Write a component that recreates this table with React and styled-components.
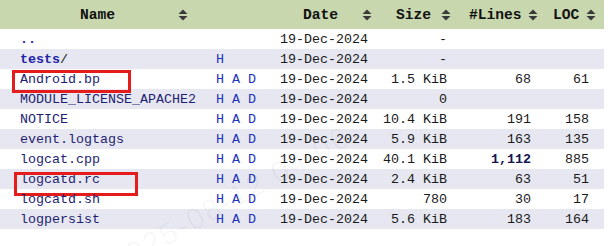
import styled, { createGlobalStyle } from 'styled-components';

const GlobalStyle = createGlobalStyle`
  body {
    margin: 0;
    background: #fff;
    font-family: "Liberation Mono", "DejaVu Sans Mono", monospace;
  }
`;

const COLS = '196px 76px 108px 79px 87px 58px';

const Listing = styled.div`
  position: relative;
  width: 604px;
  height: 246px;
  overflow: hidden;
  font-size: 13.33px;
`;

const HeadRow = styled.div`
  display: grid;
  grid-template-columns: ${COLS};
  height: 29px;
  background: #c8d7ae;
`;

const HeadCell = styled.div`
  display: flex;
  align-items: center;
  padding-left: ${p => p.$pad || 0}px;
  padding-right: 8px;
  font-family: "Liberation Mono", monospace;
  font-weight: bold;
  font-size: 14.6px;
  color: #111;
`;

const HeadLabel = styled.span`
  flex: 1;
`;

const Row = styled.div`
  display: grid;
  grid-template-columns: ${COLS};
  height: 20px;
  align-items: center;
  background: ${p => (p.$shade ? '#e6e7f0' : '#fff')};
  color: #1a1a1a;
`;

const NameCell = styled.div`
  position: relative;
  padding-left: 20px;
  white-space: nowrap;
  color: #1e1e72;
`;

const DirLink = styled.span`
  font-weight: bold;
  color: #2323a8;
`;

const Slash = styled.span`
  color: #222;
`;

const Mark = styled.span`
  position: absolute;
  left: ${p => p.$left}px;
  top: ${p => p.$top}px;
  width: ${p => p.$w}px;
  height: ${p => p.$h}px;
  border: 3px solid #e41c1c;
  box-sizing: border-box;
  pointer-events: none;
`;

const AttrCell = styled.div`
  padding-left: 20px;
  color: #2233bb;
  white-space: pre;
`;

const DateCell = styled.div`
  padding-left: 8px;
`;

const NumCell = styled.div`
  text-align: right;
  padding-right: ${p => p.$pad}px;
  font-weight: ${p => (p.$bold ? 'bold' : 'normal')};
  color: ${p => (p.$bold ? '#141450' : 'inherit')};
  white-space: pre;
`;

const Watermark = styled.div`
  position: absolute;
  left: 104px;
  top: 250px;
  transform: rotate(-29deg);
  transform-origin: left top;
  font-family: "Liberation Sans", sans-serif;
  font-size: 30px;
  letter-spacing: 2px;
  color: rgba(0, 0, 0, 0.035);
  white-space: nowrap;
  pointer-events: none;
`;

const SortIcon = () => (
  <svg width="10" height="12" viewBox="0 0 10 12">
    <path d="M5 0.5 L9.5 5 L0.5 5 Z" fill="#3a3a3a" />
    <path d="M0.5 7 L9.5 7 L5 11.5 Z" fill="#3a3a3a" />
  </svg>
);

const files = [
  { name: '..', dir: true, attr: '', size: '-' },
  { name: 'tests', dir: true, slash: true, attr: 'H', size: '-' },
  { name: 'Android.bp', attr: 'H A D', size: '1.5 KiB', lines: '68', loc: '61', mark: { left: 12, top: -2, w: 119, h: 23 } },
  { name: 'MODULE_LICENSE_APACHE2', attr: 'H A D', size: '0' },
  { name: 'NOTICE', attr: 'H A D', size: '10.4 KiB', lines: '191', loc: '158' },
  { name: 'event.logtags', attr: 'H A D', size: '5.9 KiB', lines: '163', loc: '135' },
  { name: 'logcat.cpp', attr: 'H A D', size: '40.1 KiB', lines: '1,112', bold: true, loc: '885' },
  { name: 'logcatd.rc', attr: 'H A D', size: '2.4 KiB', lines: '63', loc: '51', mark: { left: 14, top: 0, w: 124, h: 24 } },
  { name: 'logcatd.sh', attr: 'H A D', size: '780', lines: '30', loc: '17' },
  { name: 'logpersist', attr: 'H A D', size: '5.6 KiB', lines: '183', loc: '164' },
];

const headers = [
  { label: 'Name', pad: 80 },
  { label: '', pad: 0, noIcon: true },
  { label: 'Date', pad: 31 },
  { label: 'Size', pad: 16 },
  { label: '#Lines', pad: 10 },
  { label: 'LOC', pad: 7 },
];

export default function App() {
  return (
    <>
      <GlobalStyle />
      <Listing>
        <HeadRow>
          {headers.map((h, i) => (
            <HeadCell key={i} $pad={h.pad}>
              <HeadLabel>{h.label}</HeadLabel>
              {!h.noIcon && <SortIcon />}
            </HeadCell>
          ))}
        </HeadRow>
        {files.map((f, i) => (
          <Row key={f.name} $shade={i % 2 === 1}>
            <NameCell>
              {f.dir ? <DirLink>{f.name}</DirLink> : f.name}
              {f.slash && <Slash>/</Slash>}
              {f.mark && <Mark $left={f.mark.left} $top={f.mark.top} $w={f.mark.w} $h={f.mark.h} />}
            </NameCell>
            <AttrCell>{f.attr}</AttrCell>
            <DateCell>19-Dec-2024</DateCell>
            <NumCell $pad={12}>{f.size}</NumCell>
            <NumCell $pad={15} $bold={f.bold}>{f.lines || ''}</NumCell>
            <NumCell $pad={15}>{f.loc || ''}</NumCell>
          </Row>
        ))}
        <Watermark>2025-08-12 04:06</Watermark>
      </Listing>
    </>
  );
}
